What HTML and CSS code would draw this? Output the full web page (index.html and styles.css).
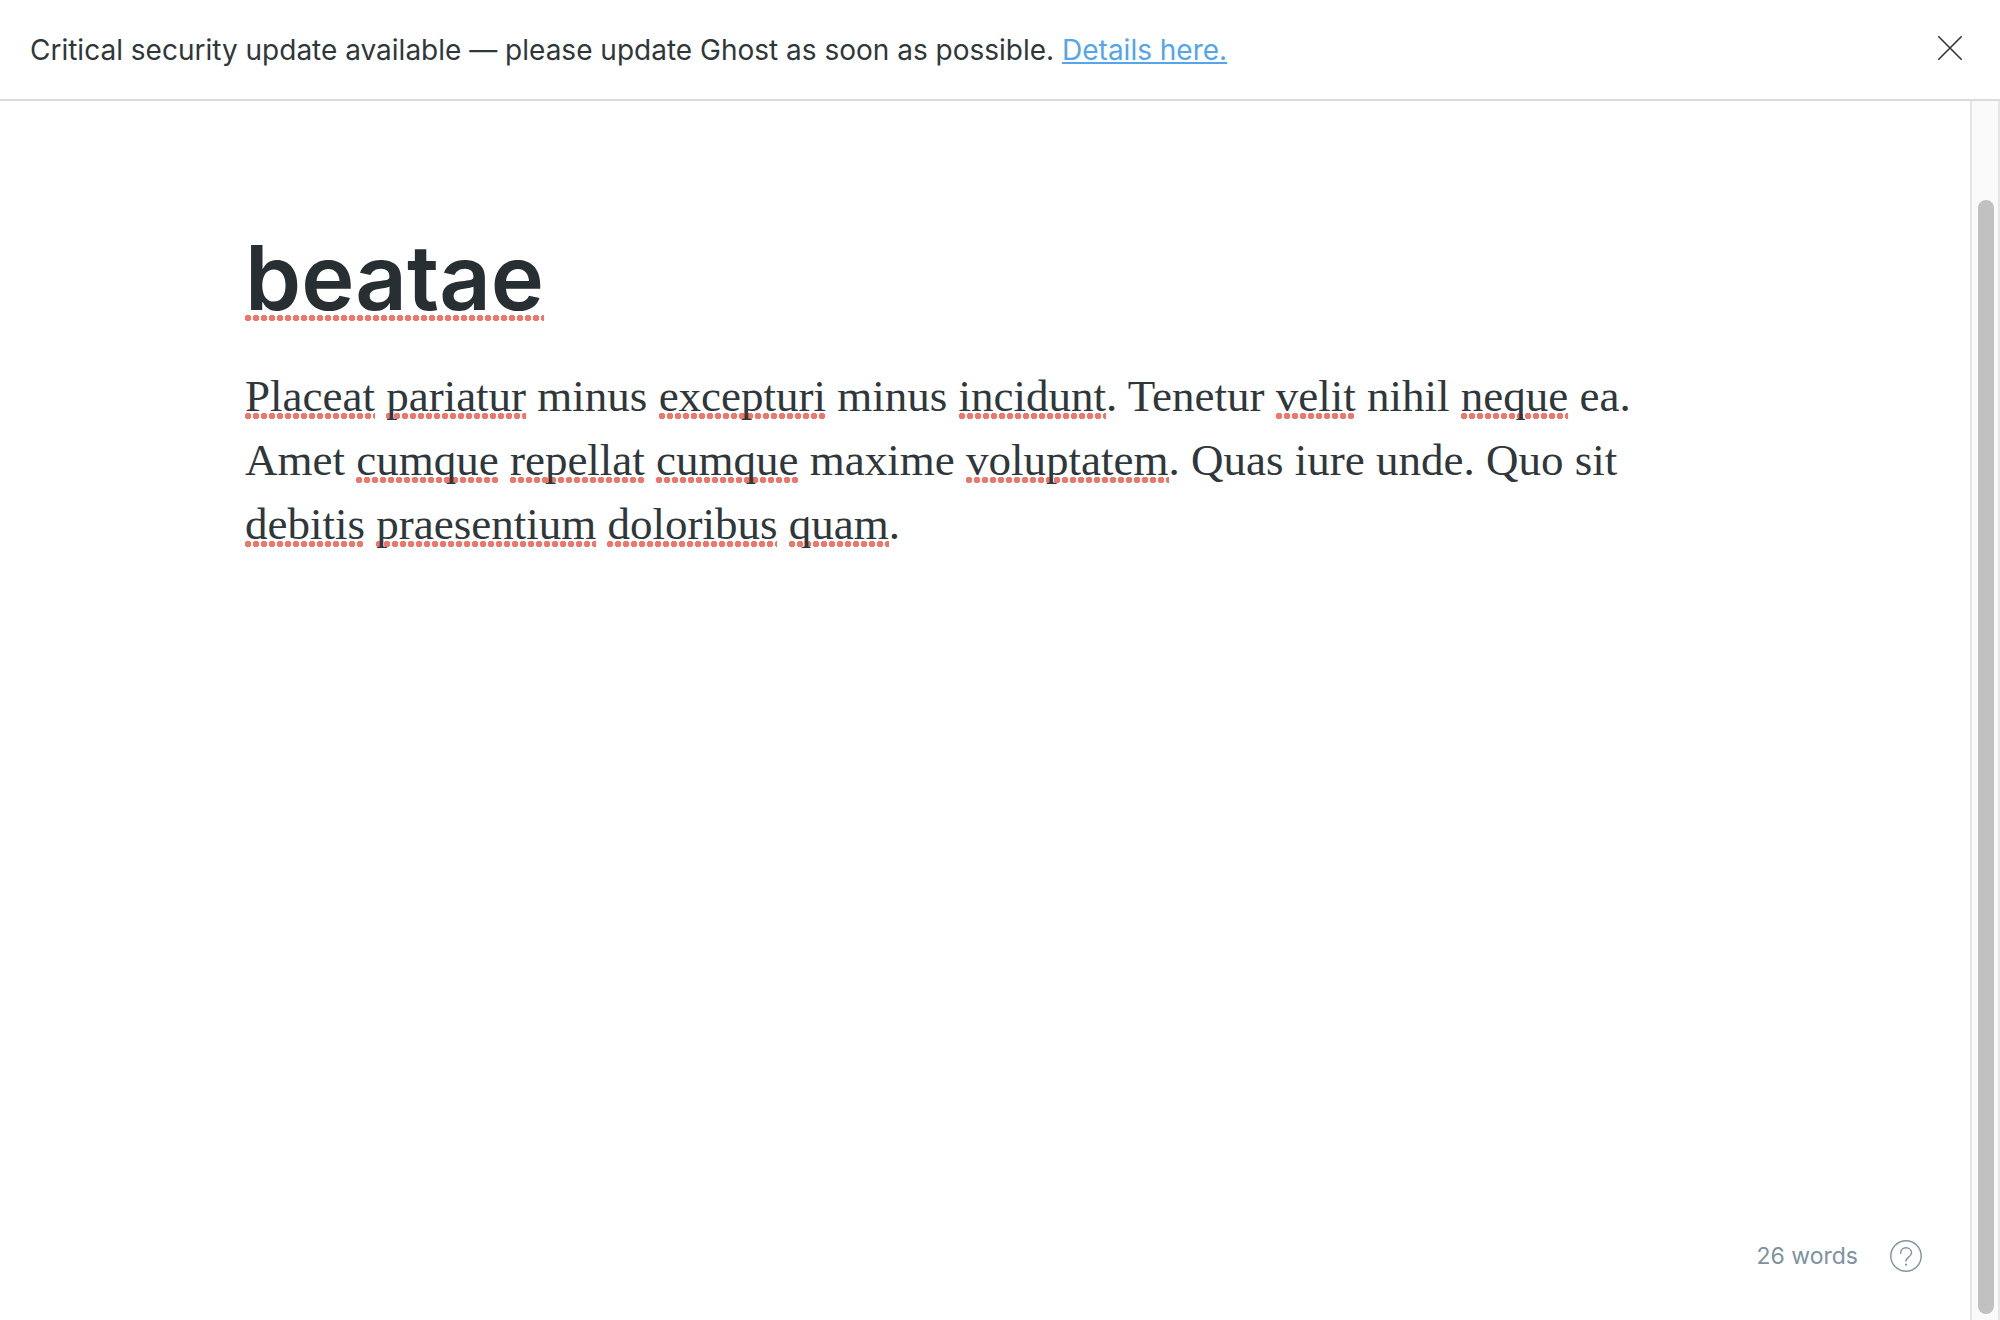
FILE: index.html
```html
<!DOCTYPE html>
<html lang="en">
<head>
  <meta charset="utf-8">
  <meta name="viewport" content="width=device-width, initial-scale=1">
  <title>beatae</title>
  <link rel="stylesheet" href="styles.css">
</head>
<body>
  <aside class="alert">
    <p class="alert-text">Critical security update available — please update Ghost as soon as possible. <a class="alert-link" href="#">Details here.</a></p>
    <button class="alert-close" type="button" aria-label="Close">
      <svg width="24" height="24" viewBox="0 0 24 24" fill="none" stroke="currentColor" stroke-width="1.6" stroke-linecap="round"><path d="M.8.8l22.4 22.4M23.2.8L.8 23.2"/></svg>
    </button>
  </aside>
  <div class="workspace">
    <main class="editor">
      <article class="post">
        <h1 class="post-title"><span class="typo">beatae</span></h1>
        <p class="post-body"><span class="typo">Placeat</span> <span class="typo">pariatur</span> minus <span class="typo">excepturi</span> minus <span class="typo">incidunt</span>. Tenetur <span class="typo">velit</span> nihil <span class="typo">neque</span> ea. Amet <span class="typo">cumque</span> <span class="typo">repellat</span> <span class="typo">cumque</span> maxime <span class="typo">voluptatem</span>. Quas iure unde. Quo sit <span class="typo">debitis</span> <span class="typo">praesentium</span> <span class="typo">doloribus</span> <span class="typo">quam</span>.</p>
      </article>
      <footer class="status">
        <span class="word-count">26 words</span>
        <button class="help" type="button" aria-label="Help">
          <svg width="32" height="32" viewBox="0 0 32 32" fill="none" stroke="currentColor" stroke-width="1.4" stroke-linecap="round"><circle cx="16" cy="16" r="15.2"/><path d="M10.7 13.2c0-3.2 2.2-5.4 5.3-5.4s5.5 2.1 5.5 5c0 4.4-5.5 4.2-5.5 8.2"/><path d="M16 24.4v.4" stroke-width="2"/></svg>
        </button>
      </footer>
    </main>
    <div class="scroll-track"><div class="scroll-thumb"></div></div>
  </div>
</body>
</html>
```
FILE: styles.css
```css
* {
  box-sizing: border-box;
}

body {
  margin: 0;
  min-height: 100vh;
  display: flex;
  flex-direction: column;
  background: #fff;
  color: #2f373b;
  font-family: Inter, "Liberation Sans", sans-serif;
}

button {
  display: flex;
  padding: 0;
  border: 0;
  background: none;
  color: inherit;
  cursor: pointer;
}

.alert {
  display: flex;
  align-items: flex-start;
  justify-content: space-between;
  padding: 29px 38px 28px 30px;
  border-bottom: 2px solid #dadcdb;
}

.alert-text {
  margin: 0;
  font-size: 28px;
  line-height: 42px;
}

.alert-link {
  color: #54a5eb;
  text-decoration-thickness: 2px;
  text-underline-offset: 2px;
  text-decoration-skip-ink: none;
}

.alert-close {
  padding: 7px 0;
}

.workspace {
  flex: 1;
  display: flex;
}

.editor {
  flex: 1;
  display: flex;
  flex-direction: column;
  justify-content: space-between;
}

.post {
  width: 100%;
  max-width: 1480px;
  margin: 0 auto;
  padding-top: 123px;
}

.post-title {
  margin: 0 0 32px;
  font-size: 90px;
  font-weight: 600;
  line-height: 108px;
  color: #282f32;
}

.post-body {
  margin: 0;
  font-family: Georgia, "Liberation Serif", serif;
  font-size: 45px;
  line-height: 64px;
}

/* Spell-checker dots under unknown words */
.typo {
  background: radial-gradient(circle at 3px 3px, #f0756b 3px, transparent 3px) 0 calc(100% - 2px) / 8px 6px repeat-x;
}

.post-title .typo {
  background-position-y: calc(100% - 11px);
}

.status {
  display: flex;
  align-items: center;
  justify-content: flex-end;
  gap: 32px;
  padding: 48px;
  color: #7d929f;
}

.word-count {
  font-size: 23px;
  line-height: 32px;
}

.scroll-track {
  width: 30px;
  display: flex;
  padding: 99px 4px 6px 6px;
  border: solid #e6e6e6;
  border-width: 0 2px;
  background: #fafafa;
}

.scroll-thumb {
  flex: 1;
  border-radius: 8px;
  background: #c1c1c1;
}
```
